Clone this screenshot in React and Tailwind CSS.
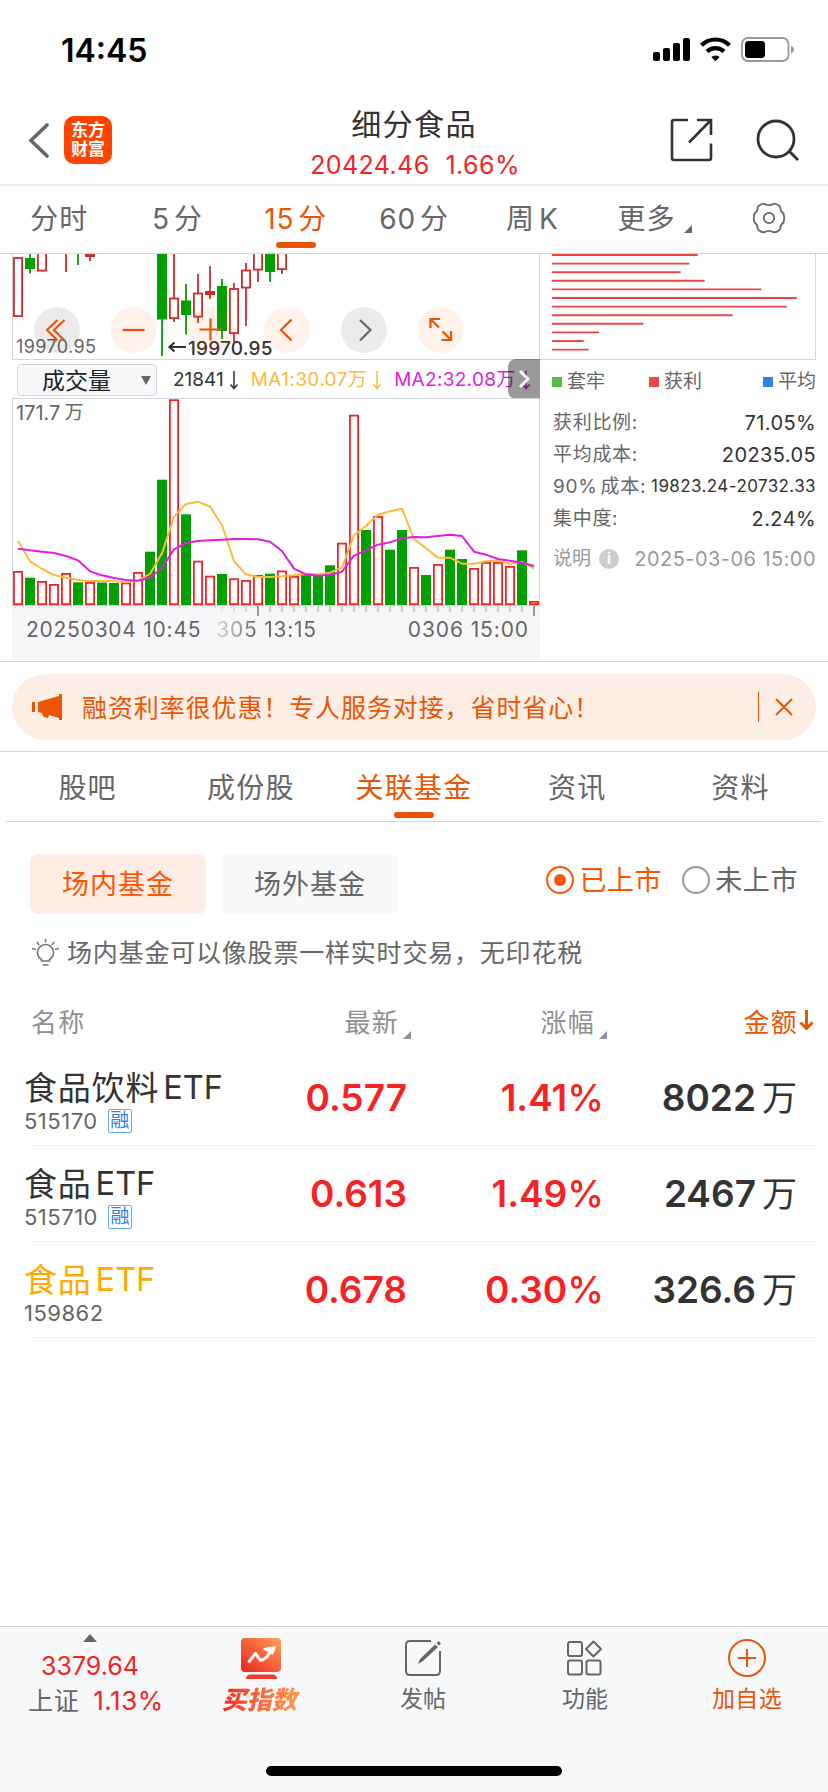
import React, { useState } from "react";

const UP = "#f52323";
const DOWN = "#00a000";

// [direction, top of bar]
const volumes = [
	["r", 571], ["g", 577.7], ["r", 581], ["r", 584], ["r", 573], ["g", 582.3], ["r", 582], ["g", 582.5],
	["g", 583], ["r", 582.5], ["r", 572], ["g", 551.7], ["g", 479.7], ["r", 399.3], ["g", 514.3], ["r", 560.7],
	["r", 575.7], ["g", 574], ["r", 578.3], ["r", 580], ["r", 575], ["g", 573.7], ["r", 570.5], ["r", 576],
	["g", 573], ["g", 575], ["g", 565.3], ["r", 542.7], ["r", 414.7], ["g", 530], ["r", 516], ["g", 549.7],
	["g", 530], ["r", 567], ["g", 575], ["r", 564], ["g", 549.7], ["g", 559], ["r", 568], ["r", 562],
	["r", 562], ["r", 566], ["g", 550.3], ["r", 601],
];

const ma1 = [
	453, 514, 537, 555, 563, 570, 573, 573, 574, 577, 572, 552, 490, 380, 342, 335, 350, 405, 514, 553, 561, 561,
	559, 556, 552, 553, 548, 532, 436, 408, 374, 364, 356, 447, 475, 503, 503, 521, 521, 514, 512, 521, 516, 535,
];

const ma2 = [
	476, 481, 485, 489, 498, 511, 544, 556, 564, 570, 572, 563, 533, 478, 459, 453, 451, 449, 447, 447, 448, 455,
	483, 536, 553, 557, 554, 545, 497, 481, 464, 457, 445, 441, 442, 438, 434, 438, 485, 494, 507, 512, 518, 528,
];

// index, direction, body top, body bottom, wick top, wick bottom
const candles = [
	[0, "r", 258, 317, 257, 317],
	[1, "g", 258, 269, 250, 273.5],
	[2, "r", 240, 271.5, 240, 271.5],
	[4, "w", 240, 250, 240, 272],
	[5, "g", 240, 250, 240, 265],
	[6, "f", 250, 257, 250, 261],
	[12, "g", 240, 319.5, 240, 356],
	[13, "r", 298.5, 319, 240, 322],
	[14, "g", 300.5, 315, 284, 334.5],
	[15, "r", 293.5, 317.5, 274, 323],
	[16, "f", 291, 295, 266, 299],
	[17, "g", 286, 331, 279, 339],
	[18, "r", 289, 334, 283, 342],
	[19, "r", 270.5, 288.5, 263, 326],
	[20, "r", 240, 270.5, 240, 282],
	[21, "g", 240, 272, 240, 282],
	[22, "r", 240, 270, 240, 274],
];

const chips = [473, 448, 422, 494, 664, 770, 740, 578, 310, 177, 131, 146];

const funds = [
	{ name: "食品饮料", code: "515170", margin: true, price: "0.577", rate: "1.41", amount: "8022", color: "text-[#333]" },
	{ name: "食品", code: "515710", margin: true, price: "0.613", rate: "1.49", amount: "2467", color: "text-[#333]" },
	{ name: "食品", code: "159862", margin: false, price: "0.678", rate: "0.30", amount: "326.6", color: "text-[#ffaa00]" },
];

const toPoints = (list) => list.map((v, i) => `${18 + 12 * i},${390 + v / 3}`).join(" ");

function StatusBar() {
	return (
		<div className="flex h-[98px] justify-between pl-[61px] pr-8">
			<span className="mt-[31px] text-[32px] leading-[40px] font-semibold text-black">14:45</span>
			<svg width="144" height="30" viewBox="652 35 144 30" className="mt-[35px]">
				<rect x="653" y="52" width="7" height="9" rx="2" />
				<rect x="663" y="48" width="7" height="13" rx="2" />
				<rect x="673" y="43" width="7" height="18" rx="2" />
				<rect x="683" y="38" width="7" height="23" rx="2" />
				<g fill="none" stroke="#000" strokeWidth="4.2">
					<path d="M701.5 45.2a20 20 0 0 1 28 0" />
					<path d="M707 51.6a12.3 12.3 0 0 1 17 0" />
				</g>
				<path d="M711.3 57a6.3 6.3 0 0 1 8.4 0l-4.2 4.2z" />
				<rect x="742" y="38" width="46.500" height="23" rx="6" fill="none" stroke="#999" strokeWidth="1.8" />
				<rect x="745" y="41" width="20" height="17" rx="3.500" />
				<path d="M791 45.500c4 1.500 4 6.500 0 8z" fill="#999" />
			</svg>
		</div>
	);
}

function Header() {
	return (
		<header className="flex h-[88px] items-center justify-between border-b-2 border-[#eee] pl-7 pr-7">
			<div className="mb-[3px] flex w-[200px] items-center gap-[14px]">
				<svg width="22" height="36" viewBox="0 0 22 36" fill="none" stroke="#666" strokeWidth="3.600" strokeLinecap="round">
					<path d="M19 3 3 18.500 19 34" />
				</svg>
				<div className="grid h-12 w-12 place-content-center rounded-[10px] bg-[#ff4400] text-[17px] leading-[19px] font-bold text-white">
					<span>东方</span>
					<span>财富</span>
				</div>
			</div>
			<div className="flex flex-col items-center pt-1 whitespace-nowrap">
				<h1 className="text-[30px] leading-[44px] tracking-[1.4px] text-[#333]">细分食品</h1>
				<p className="flex gap-4 pl-[2px] text-[25px] leading-[38px] tracking-[0.4px] text-[#f52323]">
					<span>20424.46</span>
					<span>1.66%</span>
				</p>
			</div>
			<div className="mb-[3px] flex w-[200px] items-center justify-end gap-[42px]">
				<svg width="44" height="44" viewBox="0 0 44 44" fill="none" stroke="#333" strokeWidth="2.600">
					<path d="M18 2H4Q2 2 2 4V40Q2 42 4 42H39Q41 42 41 40V25.500M27 2H41V17M41 2 19 24.500" />
				</svg>
				<svg width="44" height="44" viewBox="0 0 44 44" fill="none" stroke="#333" strokeWidth="2.800">
					<circle cx="20" cy="21" r="18" />
					<path d="m33 33 9 9" />
				</svg>
			</div>
		</header>
	);
}

function PeriodTabs() {
	const [active, setActive] = useState(2);
	const tabs = [["", "分时"], ["5", "分"], ["15", "分"], ["60", "分"], ["周", "K"]];

	return (
		<nav className="grid h-[68px] grid-cols-7 border-b border-[#d4d4dc] text-[28px] text-[#666]">
			{tabs.map(([a, b], i) => (
				<button
					key={i}
					onClick={() => setActive(i)}
					className={`flex flex-col items-center ${i === active ? "text-[#ea5504]" : ""}`}>
					<span className="flex h-14 items-center gap-[4px] pt-[9px] tracking-[0.8px]">
						{a && <span>{a}</span>}
						<span>{b}</span>
					</span>
					{i === active && <span className="h-[6px] w-10 rounded-full bg-[#ea5504]"></span>}
				</button>
			))}
			<button className="flex h-14 items-center justify-center gap-2 pt-[9px] pl-2">
				<span className="tracking-[1px]">更多</span>
				<svg width="8" height="8" className="mt-5"><path d="M8 0V8H0z" fill="#666" /></svg>
			</button>
			<button className="flex h-16 items-center justify-center">
				<svg width="34" height="34" viewBox="-17 -17 34 34" fill="none" stroke="#666" strokeWidth="1.800" strokeLinejoin="round">
					<path d="M0 -12.800Q2.500 -12.800 4.500 -14.200Q7 -14.800 10.500 -12Q11.800 -10.500 11.500 -8.500Q12 -6 14.400 -4.600Q16 0 14.400 4.600Q12 6 11.500 8.500Q11.800 10.500 10.500 12Q7 14.800 4.500 14.200Q2.500 12.800 0 12.800Q-2.500 12.800 -4.500 14.200Q-7 14.800 -10.500 12Q-11.800 10.500 -11.500 8.500Q-12 6 -14.400 4.600Q-16 0 -14.400 -4.600Q-12 -6 -11.500 -8.500Q-11.800 -10.500 -10.500 -12Q-7 -14.800 -4.500 -14.200Q-2.500 -12.800 0 -12.800Z" />
					<circle r="5.200" />
				</svg>
			</button>
		</nav>
	);
}

function PriceChart() {
	return (
		<div className="relative h-[106px] border-x border-b border-[#d4d4dc]">
			<svg width="526" height="105" viewBox="13 254 526 105" className="block">
				{candles.map(([i, dir, top, bottom, wickTop, wickBottom]) => {
					const x = 13 + 12 * i;
					const color = dir === "g" ? DOWN : "#d02c2c";
					return (
						<g key={i}>
							<path d={`M${x + 5} ${wickTop}V${wickBottom}`} stroke={color} strokeWidth="1.800" />
							{dir !== "w" && (
								<rect
									x={dir === "r" ? x + 0.9 : x}
									y={top}
									width={dir === "r" ? 8.2 : 10}
									height={bottom - top - (dir === "r" ? 0.9 : 0)}
									fill={dir === "r" ? "#fff" : color}
									stroke={dir === "r" ? color : "none"}
									strokeWidth="1.800"
								/>
							)}
						</g>
					);
				})}
				{/* low marker arrow */}
				<path d="M186 347H169.500M174.500 342.500 169.500 347l5 4.500" stroke="#333" strokeWidth="2.200" fill="none" />
			</svg>

			<span className="absolute left-[3px] top-[81px] text-[18px] leading-[24px] tracking-[0.4px] text-[#666]">19970.95</span>
			<span className="absolute left-[175px] top-[83px] text-[19px] leading-[24px] font-medium tracking-[0.2px] text-[#333]">19970.95</span>

			{/* floating chart controls */}
			<svg width="526" height="105" viewBox="13 254 526 105" className="absolute left-0 top-0" fill="none" strokeWidth="2.200">
				<circle cx="57" cy="330" r="23" fill="#000" fillOpacity=".08" />
				<circle cx="133.500" cy="330" r="23" fill="#ff5500" fillOpacity=".08" />
				<circle cx="211" cy="330" r="23" fill="#ff5500" fillOpacity=".08" />
				<circle cx="287" cy="330" r="23" fill="#ff5500" fillOpacity=".08" />
				<circle cx="364" cy="330" r="23" fill="#000" fillOpacity=".08" />
				<circle cx="440.500" cy="330" r="23" fill="#ff5500" fillOpacity=".08" />
				<g stroke="#ea5504">
					<path d="M57.500 320 47 330l10.500 10.500M64.500 320 54 330l10.500 10.500" />
					<path d="M122.500 330h22" />
					<path d="M199.500 329.500h22M210.500 318.500v22" />
					<path d="M291.500 319.500 281 330l10.500 10.500" />
					<path d="M430.500 328v-9h9.500M431 319.500l8 8M451 331v9h-9.500M450.500 339.500l-8-8" strokeWidth="2.200" />
				</g>
				<path d="M360 320l10.500 10L360 340.500" stroke="#666" />
			</svg>
		</div>
	);
}

function Arrow() {
	return (
		<svg width="10" height="20" className="ml-[5px]" fill="none" stroke="currentColor" strokeWidth="1.500">
			<path d="M5 1V18M1.500 14.500 5 18.500l3.500-4" />
		</svg>
	);
}

function VolumeBar() {
	return (
		<div className="relative flex h-[38px] items-center whitespace-nowrap pt-[2px] pl-[5px] text-[19px]">
			<button className="flex h-8 w-[140px] items-center justify-between rounded-[4px] border border-[#d4d4dc] bg-[#f7f8fa] pl-6 pr-[5px] text-[23px] text-[#222]">
				<span className="pt-[2px]">成交量</span>
				<svg width="10" height="9"><path d="M0 0H10L5 9z" fill="#666" /></svg>
			</button>
			<span className="ml-4 flex items-center text-[#333]">
				21841
				<Arrow />
			</span>
			<span className="ml-3 flex items-center tracking-[0.4px] text-[#ffb93c]">
				MA1:30.07万
				<Arrow />
			</span>
			<span className="ml-3 flex items-center tracking-[0.3px] text-[#e01ee0]">
				MA2:32.08万
				<Arrow />
			</span>
			<div className="absolute -top-[1px] right-0 flex h-10 w-8 items-center justify-center rounded-l-[8px] bg-black/40">
				<svg width="12" height="20" fill="none" stroke="#fff" strokeWidth="3"><path d="m2 2 8 8-8 8" /></svg>
			</div>
		</div>
	);
}

function VolumeChart() {
	return (
		<div className="relative h-[262px] bg-[#f7f7fa]">
			<svg width="528" height="262" viewBox="12 398 528 262" className="block">
				<rect x="12.500" y="398.500" width="527" height="207" fill="#fff" stroke="#d4d4dc" />
				{volumes.map(([dir, top], i) =>
					dir === "g" ? (
						<rect key={i} x={13 + 12 * i} y={top} width="10" height={605 - top} fill={DOWN} />
					) : (
						<rect key={i} x={13.9 + 12 * i} y={top + 0.9} width="8.200" height={Math.max(603.3 - top, 1)} fill="#fff" stroke={UP} strokeWidth="1.800" />
					)
				)}
				<polyline points={toPoints(ma1)} fill="none" stroke="#ffb93c" strokeWidth="2" strokeLinejoin="round" />
				<polyline points={toPoints(ma2)} fill="none" stroke="#e01ee0" strokeWidth="2" strokeLinejoin="round" />
				{volumes.map((_, i) => {
					if (i < 17) return null;
					const major = i === 20 || i === 43;
					return (
						<path
							key={i}
							d={`M${18 + 12 * i} 606V${major ? 616 : 612}`}
							stroke={major ? "#999" : "#ccc"}
							strokeWidth="2"
							opacity={i < 20 ? (i - 16) * 0.27 : 1}
						/>
					);
				})}
			</svg>
			<span className="absolute left-[4px] top-[3px] flex gap-1 text-[20px] leading-[24px] text-[#666]">
				<span>171.7</span>
				<span className="text-[19px]">万</span>
			</span>
			<div className="absolute left-0 top-[217px] flex w-full whitespace-nowrap pl-[14px] text-[21px] leading-[30px] tracking-[0.75px] text-[#666]">
				<span>20250304 10:45</span>
				<span className="ml-[15px] bg-gradient-to-r from-[#666]/20 to-[#666] to-40% bg-clip-text text-transparent">305 13:15</span>
				<span className="ml-auto pr-[11px] tracking-[0.9px]">0306 15:00</span>
			</div>
		</div>
	);
}

function CostPanel() {
	const rows = [
		["获利比例:", "71.05%"],
		["平均成本:", "20235.05"],
		[<><span className="mr-[3px]">90%</span>成本:</>, "19823.24-20732.33"],
		["集中度:", "2.24%"],
	];

	return (
		<section className="w-[276px] whitespace-nowrap">
			<div className="h-[106px] border-r border-b border-[#d4d4dc]">
				<svg width="275" height="105" viewBox="540 254 275 105" className="block" stroke="#ee4444" strokeWidth="1.900">
					{chips.map((end, i) => (
						<path key={i} d={`M552 ${255 + 8.6 * i}H${540 + end / 3}`} />
					))}
				</svg>
			</div>
			<div className="flex h-11 items-center pl-3 text-[19px] text-[#666]">
				<span className="flex w-[97px] items-center gap-[5px]"><i className="h-[10px] w-[10px] bg-[#58b944]"></i>套牢</span>
				<span className="flex items-center gap-[5px]"><i className="h-[10px] w-[10px] bg-[#ee4848]"></i>获利</span>
				<span className="ml-auto flex items-center gap-[5px]"><i className="h-[10px] w-[10px] bg-[#3080e6]"></i>平均</span>
			</div>
			<dl className="pl-[13px] pt-[3px] text-[19px] text-[#666]">
				{rows.map(([label, value], i) => (
					<div key={i} className="flex h-8 items-center justify-between">
						<dt className="tracking-[0.7px]">{label}</dt>
						<dd className={`text-[#333] ${i === 2 ? "text-[17px] tracking-[0.4px]" : "text-[20px] tracking-[0.4px]"}`}>{value}</dd>
					</div>
				))}
			</dl>
			<div className="flex h-12 items-center pl-[13px] text-[19px] text-[#999]">
				<span>说明</span>
				<span className="ml-2 flex h-5 w-5 items-center justify-center rounded-full bg-[#ccc] text-[15px] font-bold text-white">i</span>
				<span className="ml-auto text-[20px] tracking-[0.45px]">2025-03-06 15:00</span>
			</div>
		</section>
	);
}

function Banner() {
	return (
		<div className="border-y border-[#d4d4dc] px-3 pt-3 pb-[11px]">
			<div className="flex h-[66px] items-center rounded-full bg-[#fdeee5] pl-5 text-[#ea5504]">
				<svg width="30" height="26" viewBox="0 0 30 26" fill="currentColor">
					<path d="M0 8h3v10H0zM6 8 27 2V0h3v26h-3v-2l-10-3-1 3-4-1-2-3V19l-4-1z" />
				</svg>
				<p className="ml-5 pt-[3px] text-[25px] tracking-[0.9px]">融资利率很优惠！专人服务对接，省时省心！</p>
				<span className="ml-auto mr-4 h-[30px] w-px bg-[#ea5504]"></span>
				<svg width="18" height="18" className="mr-[23px]" stroke="currentColor" strokeWidth="2"><path d="m1 1 16 16M17 1 1 17" /></svg>
			</div>
		</div>
	);
}

function SectionTabs() {
	const [active, setActive] = useState(2);

	return (
		<nav className="mx-[6px] grid h-[70px] grid-cols-5 border-b border-[#d4d4dc] text-[28px] text-[#666]">
			{["股吧", "成份股", "关联基金", "资讯", "资料"].map((tab, i) => (
				<button
					key={tab}
					onClick={() => setActive(i)}
					className={`flex flex-col items-center tracking-[1.2px] ${i === active ? "text-[#ea5504]" : ""}`}>
					<span className="flex h-[60px] items-center pt-[12px]">{tab}</span>
					{i === active && <span className="h-[6px] w-10 rounded-full bg-[#ea5504]"></span>}
				</button>
			))}
		</nav>
	);
}

function Filters() {
	return (
		<div className="flex items-center pt-8 pl-[30px] text-[27px] tracking-[1px] whitespace-nowrap">
			<button className="h-[60px] w-44 rounded-[8px] bg-[#ffede5] pt-[3px] text-[#ff5500]">场内基金</button>
			<button className="ml-4 h-[60px] w-44 rounded-[8px] bg-[#f7f8fa] pt-[3px] text-[#666]">场外基金</button>
			<label className="mb-2 ml-auto flex items-center gap-[5px] tracking-[0.6px] text-[#ff5500]">
				<i className="flex h-7 w-7 items-center justify-center rounded-full border-2 border-[#ff5500]">
					<i className="h-3 w-3 rounded-full bg-[#ff5500]"></i>
				</i>
				<span className="pt-[2px]">已上市</span>
			</label>
			<label className="mb-2 mr-[30px] ml-5 flex items-center gap-[5px] tracking-[0.6px] text-[#666]">
				<i className="h-7 w-7 rounded-full border-2 border-[#999]"></i>
				<span className="pt-[2px]">未上市</span>
			</label>
		</div>
	);
}

function Corner() {
	return <svg width="8" height="8" className="mt-[26px]"><path d="M8 0V8H0z" fill="#909098" /></svg>;
}

function FundTable() {
	return (
		<section className="flex-1 whitespace-nowrap">
			<p className="flex h-[78px] items-center gap-[8px] pl-8 text-[25px] tracking-[0.8px] text-[#666]">
				<svg width="27" height="28" viewBox="0 0 27 28" fill="none" stroke="#777" strokeWidth="1.600">
					<path d="M9.500 22V20.500Q5.500 18 5.500 13.500A8 8 0 0 1 21.500 13.500Q21.500 18 17.500 20.500V22ZM10.500 26H16.500M13.500 0V3.500M5 3l2 3M22 3l-2 3M0 9.500l4 1M27 9.500l-4 1" />
				</svg>
				<span className="pt-[2px]">场内基金可以像股票一样实时交易，无印花税</span>
			</p>
			<div className="grid h-[58px] grid-cols-[180px_231px_196px_207px] items-center pt-[2px] text-[26px] tracking-[1.2px] text-[#909090]">
				<span className="pl-[31px]">名称</span>
				<span className="flex items-center justify-end gap-1">最新<Corner /></span>
				<span className="flex items-center justify-end gap-1">涨幅<Corner /></span>
				<span className="flex items-center justify-end gap-[1px] text-[#ea5504]">
					金额
					<svg width="15" height="22" fill="none" stroke="currentColor" strokeWidth="3" className="-mt-1">
						<path d="M7.500 1V19M1.500 13.500l6 6 6-6" />
					</svg>
				</span>
			</div>
			{funds.map((fund) => (
				<div key={fund.code} className="mr-[10px] ml-[33px] h-24 border-b border-[#eee]">
					<div className="-ml-[9px] grid h-full grid-cols-[190px_193px_197px_193px] text-[37px] font-semibold">
						<div className="pt-[18px] font-normal">
							<div className={`flex gap-[4px] text-[33px] leading-[40px] ${fund.color}`}>
								<span className="tracking-[0.8px]">{fund.name}</span>
								<span className="text-[32.5px]">ETF</span>
							</div>
							<div className="flex items-center gap-[10px] text-[22px] leading-[26px] text-[#666]">
								<span className="tracking-[0.5px]">{fund.code}</span>
								{fund.margin && (
									<i className="flex h-6 w-6 items-center justify-center rounded-[2px] border border-[#6fa8ee] text-[19px] text-[#2f7fe0] not-italic">融</i>
								)}
							</div>
						</div>
						<span className="pt-5 text-right leading-[56px] text-[#f52323]">{fund.price}</span>
						<span className="pt-5 text-right leading-[56px] text-[#f52323]">{fund.rate}<span className="font-medium">%</span></span>
						<span className="flex justify-end gap-[6px] pt-5 leading-[56px] text-[#333]">
							{fund.amount}
							<span className="text-[35px] font-normal">万</span>
						</span>
					</div>
				</div>
			))}
		</section>
	);
}

function BottomBar() {
	return (
		<footer className="flex h-[166px] flex-col items-center justify-between border-t border-[#d4d4dc] bg-[#f7f8fa] pb-4 text-[23px] text-[#666] whitespace-nowrap">
			<div className="grid w-full grid-cols-[180px_162px_162px_162px_162px]">
				<div className="flex flex-col items-center pt-[7px]">
					<svg width="14" height="8"><path d="M7 0 14 8H0z" fill="#666" /></svg>
					<span className="mt-[7px] text-[25px] leading-[34px] text-[#f52323]">3379.64</span>
					<span className="mt-[1px] flex gap-[14px] pl-3 text-[25px] leading-[34px] tracking-[0.5px]">
						上证<span className="text-[26px] text-[#f52323]">1.13%</span>
					</span>
				</div>
				<div className="flex flex-col items-center pt-[11px]">
					<svg width="40" height="41" viewBox="0 0 40 41">
						<defs>
							<linearGradient id="buy" x1="0" y1="1" x2="1" y2="0">
								<stop offset="0" stopColor="#ee2222" />
								<stop offset="1" stopColor="#ffa055" />
							</linearGradient>
						</defs>
						<rect width="40" height="34" rx="4" fill="url(#buy)" />
						<path d="M5 41Q5 36.500 10 36.500H31Q36 36.500 36 41z" fill="#f03a2a" />
						<path d="M7.500 24.500 14.500 15.500 19.500 22.500Q28 20 29 12" fill="none" stroke="#fff" strokeWidth="3" strokeLinejoin="round" />
						<path d="M22 11Q25 8 35 8.500Q34 14 31.500 17z" fill="#fff" />
					</svg>
					<span className="mt-[4px] ml-[2px] -skew-x-12 bg-gradient-to-r from-[#ee2a22] to-[#ff9a55] bg-clip-text text-[25px] leading-[34px] font-black text-transparent">买指数</span>
				</div>
				<div className="flex flex-col items-center pt-[12px]">
					<svg width="38" height="38" viewBox="0 0 38 38" fill="none" stroke="#666" strokeWidth="2">
						<path d="M27 2H6Q2 2 2 6V32Q2 36 6 36H32Q36 36 36 32V12" />
						<path d="M14 25 16 20 31 5.500 34 8 19 22Z" fill="#666" stroke="none" />
						<path d="M32.500 4 34.500 2l2.500 2.500-2 2z" fill="#666" stroke="none" />
					</svg>
					<span className="mt-[5px] leading-[34px]">发帖</span>
				</div>
				<div className="flex flex-col items-center pt-[12px]">
					<svg width="38" height="38" viewBox="0 0 38 38" fill="none" stroke="#666" strokeWidth="2">
						<rect x="2" y="3" width="14" height="14" rx="2" />
						<rect x="2" y="21.500" width="14" height="14" rx="2" />
						<rect x="20.500" y="21.500" width="14" height="14" rx="2" />
						<path d="M27.500 2.500 35 10l-7.500 7.500L20 10z" strokeLinejoin="round" />
					</svg>
					<span className="mt-[5px] leading-[34px]">功能</span>
				</div>
				<div className="flex flex-col items-center pt-[12px] text-[#ea5504]">
					<svg width="38" height="38" viewBox="0 0 38 38" fill="none" stroke="currentColor" strokeWidth="2">
						<circle cx="19" cy="19" r="18" />
						<path d="M10 19H28M19 10V28" />
					</svg>
					<span className="mt-[5px] leading-[34px] tracking-[0.4px]">加自选</span>
				</div>
			</div>
			<div className="h-[10px] w-[296px] rounded-full bg-black"></div>
		</footer>
	);
}

export default function App() {
	return (
		<main className="flex h-[1792px] w-[828px] flex-col overflow-hidden bg-white font-['Inter','Noto_Sans_CJK_SC',sans-serif]">
			<StatusBar />
			<Header />
			<PeriodTabs />
			<div className="flex h-[407px] pl-3">
				<section className="w-[528px]">
					<PriceChart />
					<VolumeBar />
					<VolumeChart />
				</section>
				<CostPanel />
			</div>
			<Banner />
			<SectionTabs />
			<Filters />
			<FundTable />
			<BottomBar />
		</main>
	);
}
